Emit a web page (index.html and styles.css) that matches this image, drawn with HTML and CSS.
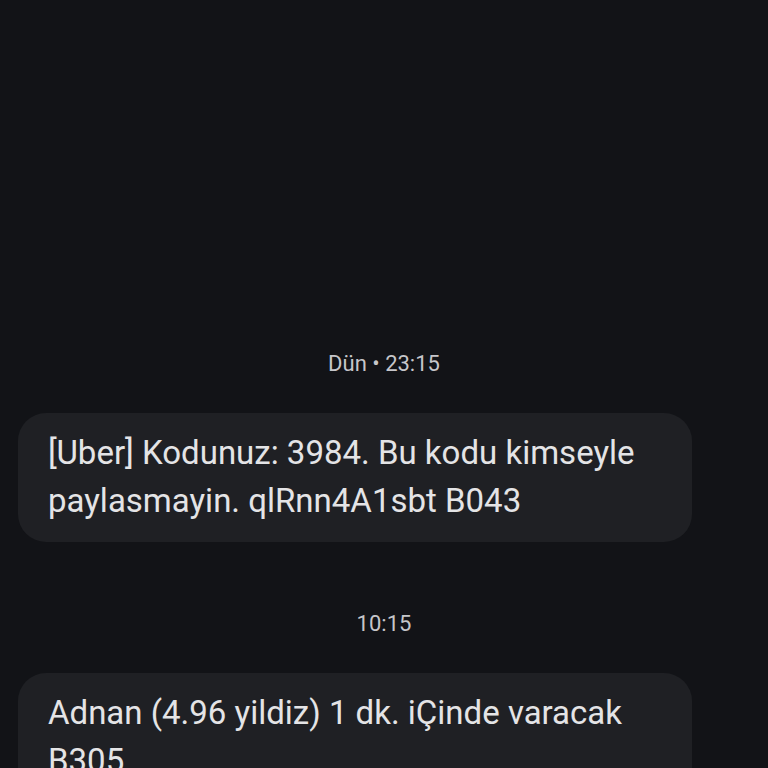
FILE: index.html
```
<!DOCTYPE html>
<html lang="tr">
 <head>
  <meta charset="utf-8">
  <title>Mesajlar</title>
  <link rel="stylesheet" href="styles.css">
 </head>
 <body>
  <div class="thread">
   <div class="stamp">Dün &bull; 23:15</div>
   <div class="bubble">[Uber] Kodunuz: 3984. Bu kodu kimseyle paylasmayin. qlRnn4A1sbt B043</div>
   <div class="stamp later">10:15</div>
   <div class="bubble">Adnan (4.96 yildiz) 1 dk. iÇinde varacak B305</div>
  </div>
 </body>
</html>
```
FILE: styles.css
```
html, body { margin: 0; padding: 0; background: #121317; height: 768px; overflow: hidden; }
body { font-family: Roboto, "Noto Sans", sans-serif; }
.thread { padding: 352px 0 0 18px; display: flex; flex-direction: column; align-items: flex-start; }
.stamp { align-self: stretch; margin-left: -18px; text-align: center; color: #c6c6ca; font-size: 22px; line-height: 24px; }
.stamp.later { margin-top: 70px; }
.bubble { margin-top: 37px; width: 674px; box-sizing: border-box; padding: 16px 30px 17px 30px;
          background: #1f2024; border-radius: 28px; color: #e4e4e6; font-size: 33px; line-height: 48px; }
```
